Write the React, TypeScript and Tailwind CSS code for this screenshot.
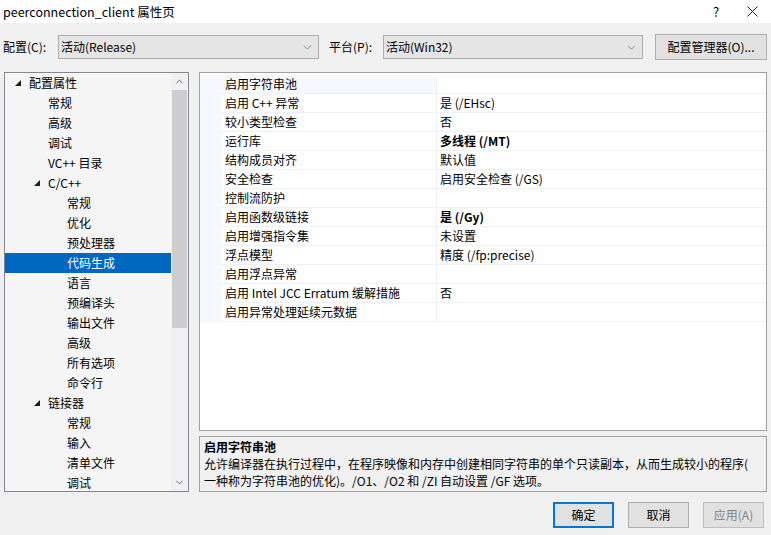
import React from 'react';
import { ChevronDown, ChevronUp } from 'lucide-react';

type TreeItem = { label: string; level: 1 | 2 | 3; expanded?: boolean; selected?: boolean };

const treeItems: TreeItem[] = [
  { label: '配置属性', level: 1, expanded: true },
  { label: '常规', level: 2 },
  { label: '高级', level: 2 },
  { label: '调试', level: 2 },
  { label: 'VC++ 目录', level: 2 },
  { label: 'C/C++', level: 2, expanded: true },
  { label: '常规', level: 3 },
  { label: '优化', level: 3 },
  { label: '预处理器', level: 3 },
  { label: '代码生成', level: 3, selected: true },
  { label: '语言', level: 3 },
  { label: '预编译头', level: 3 },
  { label: '输出文件', level: 3 },
  { label: '高级', level: 3 },
  { label: '所有选项', level: 3 },
  { label: '命令行', level: 3 },
  { label: '链接器', level: 2, expanded: true },
  { label: '常规', level: 3 },
  { label: '输入', level: 3 },
  { label: '清单文件', level: 3 },
  { label: '调试', level: 3 },
];

type Prop = { name: string; value: string; bold?: boolean; current?: boolean };

const props: Prop[] = [
  { name: '启用字符串池', value: '', current: true },
  { name: '启用 C++ 异常', value: '是 (/EHsc)' },
  { name: '较小类型检查', value: '否' },
  { name: '运行库', value: '多线程 (/MT)', bold: true },
  { name: '结构成员对齐', value: '默认值' },
  { name: '安全检查', value: '启用安全检查 (/GS)' },
  { name: '控制流防护', value: '' },
  { name: '启用函数级链接', value: '是 (/Gy)', bold: true },
  { name: '启用增强指令集', value: '未设置' },
  { name: '浮点模型', value: '精度 (/fp:precise)' },
  { name: '启用浮点异常', value: '' },
  { name: '启用 Intel JCC Erratum 缓解措施', value: '否' },
  { name: '启用异常处理延续元数据', value: '' },
];

const Expander = () => (
  <svg width="6" height="6" viewBox="0 0 6 6" className="shrink-0">
    <polygon points="6,0 6,6 0,6" fill="#1e1e1e" />
  </svg>
);

const Combo = ({ text, width }: { text: string; width: string }) => (
  <div className={`${width} h-[24px] bg-[#e5e5e5] border border-[#adadad] flex items-center pl-[2px] pr-[4px]`}>
    <span className="flex-1">{text}</span>
    <ChevronDown size={13} strokeWidth={1.2} color="#555" />
  </div>
);

const Button = ({ label, primary, disabled }: { label: string; primary?: boolean; disabled?: boolean }) => (
  <div
    className={`w-[61px] h-[26px] flex items-center justify-center bg-[#e1e1e1] ${
      primary ? 'border-2 border-[#0078d7]' : disabled ? 'border border-[#bfbfbf] bg-[#cccccc]' : 'border border-[#adadad]'
    } ${disabled ? 'text-[#838383]' : 'text-black'}`}
  >
    {label}
  </div>
);

export default function App() {
  return (
    <div
      className="w-[771px] h-[535px] bg-[#f0f0f0] text-[12px] leading-[16px] text-black overflow-hidden"
      style={{ fontFamily: '"Noto Sans CJK SC", "Noto Sans", sans-serif' }}
    >
      {/* Title bar */}
      <div className="h-[23px] bg-white flex items-center pl-[3px]">
        <span className="flex-1 text-[12.5px]">peerconnection_client 属性页</span>
        <span className="w-[30px] text-center text-[13px] mr-[16px]">?</span>
        <svg width="11" height="11" viewBox="0 0 11 11" className="mr-[13px]">
          <path d="M0.5 0.5 L10.5 10.5 M10.5 0.5 L0.5 10.5" stroke="#222" strokeWidth="1" />
        </svg>
      </div>

      {/* Configuration row */}
      <div className="mt-[11px] h-[26px] flex items-center pl-[3px]">
        <span className="w-[55px]">配置(C):</span>
        <Combo text="活动(Release)" width="w-[261px]" />
        <span className="ml-[10px] w-[54px]">平台(P):</span>
        <Combo text="活动(Win32)" width="w-[260px]" />
        <div className="ml-[12px] w-[112px] h-[26px] bg-[#e1e1e1] border border-[#adadad] flex items-center justify-center">
          配置管理器(O)...
        </div>
      </div>

      {/* Main area */}
      <div className="mt-[12px] flex pl-[4px]">
        {/* Tree */}
        <div className="w-[185px] h-[420px] border border-[#828790] bg-[#f5f5f5] flex overflow-hidden">
          <div className="flex-1 overflow-hidden">
            {treeItems.map((it, i) => (
              <div
                key={i}
                className={`h-[20px] flex items-center ${it.selected ? 'bg-[#0067c0] text-white' : ''}`}
              >
                <div
                  className={`flex items-center ${
                    it.level === 1 ? 'w-[24px] pl-[10px]' : it.level === 2 ? 'w-[43px] pl-[29px]' : 'w-[62px]'
                  }`}
                >
                  {it.expanded && <Expander />}
                </div>
                <span>{it.label}</span>
              </div>
            ))}
          </div>
          <div className="w-[17px] bg-[#f0f0f0] flex flex-col">
            <div className="h-[17px] flex items-center justify-center">
              <ChevronUp size={11} strokeWidth={2} color="#606060" />
            </div>
            <div className="h-[238px] mx-[1px] bg-[#cdcdcd]" />
            <div className="flex-1" />
            <div className="h-[17px] flex items-center justify-center">
              <ChevronDown size={11} strokeWidth={2} color="#606060" />
            </div>
          </div>
        </div>

        {/* Right column */}
        <div className="ml-[10px] w-[568px] flex flex-col">
          <div className="h-[359px] border border-[#a0a0a0] bg-white pt-[2px]">
            {props.map((p, i) => (
              <div key={i} className="h-[19px] flex">
                <div className="w-[22px] bg-[#f5f8fc]" />
                <div
                  className={`w-[214px] pl-[3px] flex items-center border-b border-[#eef1f6] ${
                    p.current ? 'bg-[#f5f8fc]' : 'bg-white'
                  }`}
                >
                  {p.name}
                </div>
                <div
                  className={`flex-1 pl-[3px] flex items-center border-b border-l border-[#eef1f6] ${
                    p.bold ? 'font-bold' : ''
                  }`}
                >
                  {p.value}
                </div>
              </div>
            ))}
          </div>
          <div className="mt-[5px] h-[56px] border border-[#a0a0a0] bg-[#f0f0f0] pl-[4px] pt-[1px] leading-[17px]">
            <div className="font-bold">启用字符串池</div>
            <div>
              允许编译器在执行过程中，在程序映像和内存中创建相同字符串的单个只读副本，从而生成较小的程序(
              <br />
              一种称为字符串池的优化)。/O1、/O2 和 /ZI 自动设置 /GF 选项。
            </div>
          </div>
        </div>
      </div>

      {/* Buttons */}
      <div className="mt-[10px] flex justify-end pr-[7px] gap-[14px]">
        <Button label="确定" primary />
        <Button label="取消" />
        <Button label="应用(A)" disabled />
      </div>
    </div>
  );
}
